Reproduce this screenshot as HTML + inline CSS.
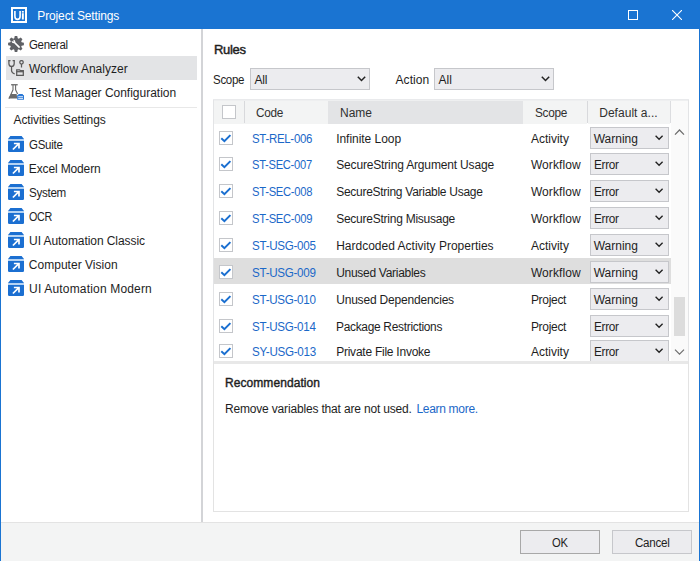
<!DOCTYPE html>
<html><head><meta charset="utf-8">
<style>
*{margin:0;padding:0;box-sizing:border-box}
html,body{width:700px;height:561px;overflow:hidden;background:#fff}
body{position:relative;font-family:"Liberation Sans",sans-serif;font-size:12px;color:#1e1e1e}
.a{position:absolute}
.t{position:absolute;white-space:nowrap}
.link{color:#1b68c8}
.dd{position:absolute;background:#ececef;border:1px solid #c6c7cb;height:22px}
.cb{position:absolute;width:14px;height:14px;border:1px solid #c4c6ca;background:#fff}
.cb svg{position:absolute;left:0;top:0}
.hdr{position:absolute;background:#f3f4f4;height:23px;top:101px}
.btn{position:absolute;background:#ececef;border:1px solid #c6c7cb;height:24px;top:530px}
</style></head><body>
<div class="a" style="left:0;top:0;width:700px;height:29px;background:#1a74d2"></div>
<div class="a" style="left:0;top:29px;width:1px;height:532px;background:#1a74d2"></div>
<div class="a" style="left:699px;top:29px;width:1px;height:532px;background:#1a74d2"></div>

<div class="t" style="left:37.30px;top:9px;line-height:14px;height:14px;color:#fff;letter-spacing:-0.133px">Project Settings</div>
<svg class="a" style="left:11px;top:7px" width="16" height="16"><rect x="1" y="1" width="14" height="14" fill="none" stroke="#fff" stroke-width="2"/><path d="M3.9 4V9.2Q3.9 12.4 6.5 12.4Q9.1 12.4 9.1 9.2V4" fill="none" stroke="#fff" stroke-width="1.6"/><rect x="10.9" y="4" width="1.9" height="1.6" fill="#fff"/><rect x="10.9" y="6.2" width="1.9" height="6.3" fill="#fff"/></svg>
<div class="a" style="left:628px;top:10px;width:10px;height:10px;border:1px solid #fff"></div>
<svg class="a" style="left:672px;top:10px" width="10" height="10"><path d="M0 0L10 10M10 0L0 10" stroke="#fff" stroke-width="1.1"/></svg>
<div class="a" style="left:6px;top:56px;width:191px;height:24px;background:#e3e4e6"></div>
<div class="t" style="left:29.30px;top:38px;line-height:14px;height:14px;letter-spacing:-0.300px;transform:scaleX(0.9539);transform-origin:0 0">General</div>
<div class="t" style="left:29.00px;top:62px;line-height:14px;height:14px;letter-spacing:0.013px">Workflow Analyzer</div>
<div class="t" style="left:29.00px;top:86px;line-height:14px;height:14px;letter-spacing:-0.012px">Test Manager Configuration</div>
<div class="a" style="left:5px;top:107px;width:192px;height:1px;background:#e8e8e8"></div>
<div class="t" style="left:13.50px;top:113px;line-height:14px;height:14px;letter-spacing:-0.100px">Activities Settings</div>
<div class="t" style="left:29.00px;top:138px;line-height:14px;height:14px;letter-spacing:-0.300px;transform:scaleX(0.9606);transform-origin:0 0">GSuite</div>
<div class="t" style="left:28.80px;top:162px;line-height:14px;height:14px;letter-spacing:-0.136px">Excel Modern</div>
<div class="t" style="left:28.80px;top:186px;line-height:14px;height:14px;letter-spacing:-0.300px;transform:scaleX(0.9688);transform-origin:0 0">System</div>
<div class="t" style="left:28.60px;top:210px;line-height:14px;height:14px;letter-spacing:-0.300px;transform:scaleX(0.8977);transform-origin:0 0">OCR</div>
<div class="t" style="left:29.10px;top:234px;line-height:14px;height:14px;letter-spacing:-0.075px">UI Automation Classic</div>
<div class="t" style="left:28.80px;top:258px;line-height:14px;height:14px;letter-spacing:0.021px">Computer Vision</div>
<div class="t" style="left:29.10px;top:282px;line-height:14px;height:14px;letter-spacing:0.174px">UI Automation Modern</div>
<svg class="a" style="left:8px;top:36px" width="16" height="16"><polygon points="6.28,2.36 6.75,0.10 9.25,0.10 9.72,2.36 10.77,2.79 12.70,1.53 14.47,3.30 13.21,5.23 13.64,6.28 15.90,6.75 15.90,9.25 13.64,9.72 13.21,10.77 14.47,12.70 12.70,14.47 10.77,13.21 9.72,13.64 9.25,15.90 6.75,15.90 6.28,13.64 5.23,13.21 3.30,14.47 1.53,12.70 2.79,10.77 2.36,9.72 0.10,9.25 0.10,6.75 2.36,6.28 2.79,5.23 1.53,3.30 3.30,1.53 5.23,2.79" fill="#5f6166"/><path d="M5.5 5.5L11.6 11.6" stroke="#fff" stroke-width="1.7"/><circle cx="5.5" cy="5.4" r="1.75" fill="#fff"/><path d="M4.1 4L5.5 5.4" stroke="#5f6166" stroke-width="1.1"/></svg>
<svg class="a" style="left:8px;top:60px" width="16" height="16" fill="none" stroke="#5a5a5a" stroke-width="1.25"><path d="M0.2 0.7H2.5M4.6 0.7H6.9"/><path d="M0.9 0.7V3.4Q0.9 6.4 3.55 6.4Q6.2 6.4 6.2 3.4V0.7"/><path d="M3.55 6.4V10.8Q3.55 12.7 6.7 14"/><circle cx="13.5" cy="2.3" r="1.75"/><path d="M13.5 4V7.5"/><path d="M8.7 9.9H11.6L12.4 10.7H15.3V15.3H8.7Z"/><path d="M8.7 11.7H15.3"/></svg>
<svg class="a" style="left:8px;top:84px" width="16" height="16"><rect x="3.1" y="0.1" width="6.6" height="1.3" fill="#6a6a6a"/><path d="M5 1V5.8L1.1 14.4M7.6 1V5.8L9.6 10" fill="none" stroke="#6a6a6a" stroke-width="1.1"/><path d="M2.9 10H8.6L9.4 14.6H0.3Z" fill="#6a6a6a"/><path d="M10.6 10H14.6L15.2 11.2H9.9Z" fill="#2a78d6"/><rect x="9.2" y="11" width="6.8" height="4.8" rx="0.5" fill="#2a78d6"/><path d="M10.2 12.7H15M10.2 14.4H15" stroke="#fff" stroke-width="0.85"/></svg>
<svg class="a" style="left:8px;top:136px" width="16" height="16"><path d="M2.4 0H13.6L16 3H0Z" fill="#1b6fd1"/><rect x="0" y="3" width="16" height="2" fill="#b5d3f3"/><path d="M0 5H16V14.8Q16 16 14.8 16H1.2Q0 16 0 14.8Z" fill="#1b6fd1"/><path d="M4.9 13.5L10.8 7.6M5.9 7.5H11V12.6" fill="none" stroke="#fff" stroke-width="1.7"/></svg>
<svg class="a" style="left:8px;top:160px" width="16" height="16"><path d="M2.4 0H13.6L16 3H0Z" fill="#1b6fd1"/><rect x="0" y="3" width="16" height="2" fill="#b5d3f3"/><path d="M0 5H16V14.8Q16 16 14.8 16H1.2Q0 16 0 14.8Z" fill="#1b6fd1"/><path d="M4.9 13.5L10.8 7.6M5.9 7.5H11V12.6" fill="none" stroke="#fff" stroke-width="1.7"/></svg>
<svg class="a" style="left:8px;top:184px" width="16" height="16"><path d="M2.4 0H13.6L16 3H0Z" fill="#1b6fd1"/><rect x="0" y="3" width="16" height="2" fill="#b5d3f3"/><path d="M0 5H16V14.8Q16 16 14.8 16H1.2Q0 16 0 14.8Z" fill="#1b6fd1"/><path d="M4.9 13.5L10.8 7.6M5.9 7.5H11V12.6" fill="none" stroke="#fff" stroke-width="1.7"/></svg>
<svg class="a" style="left:8px;top:208px" width="16" height="16"><path d="M2.4 0H13.6L16 3H0Z" fill="#1b6fd1"/><rect x="0" y="3" width="16" height="2" fill="#b5d3f3"/><path d="M0 5H16V14.8Q16 16 14.8 16H1.2Q0 16 0 14.8Z" fill="#1b6fd1"/><path d="M4.9 13.5L10.8 7.6M5.9 7.5H11V12.6" fill="none" stroke="#fff" stroke-width="1.7"/></svg>
<svg class="a" style="left:8px;top:232px" width="16" height="16"><path d="M2.4 0H13.6L16 3H0Z" fill="#1b6fd1"/><rect x="0" y="3" width="16" height="2" fill="#b5d3f3"/><path d="M0 5H16V14.8Q16 16 14.8 16H1.2Q0 16 0 14.8Z" fill="#1b6fd1"/><path d="M4.9 13.5L10.8 7.6M5.9 7.5H11V12.6" fill="none" stroke="#fff" stroke-width="1.7"/></svg>
<svg class="a" style="left:8px;top:256px" width="16" height="16"><path d="M2.4 0H13.6L16 3H0Z" fill="#1b6fd1"/><rect x="0" y="3" width="16" height="2" fill="#b5d3f3"/><path d="M0 5H16V14.8Q16 16 14.8 16H1.2Q0 16 0 14.8Z" fill="#1b6fd1"/><path d="M4.9 13.5L10.8 7.6M5.9 7.5H11V12.6" fill="none" stroke="#fff" stroke-width="1.7"/></svg>
<svg class="a" style="left:8px;top:280px" width="16" height="16"><path d="M2.4 0H13.6L16 3H0Z" fill="#1b6fd1"/><rect x="0" y="3" width="16" height="2" fill="#b5d3f3"/><path d="M0 5H16V14.8Q16 16 14.8 16H1.2Q0 16 0 14.8Z" fill="#1b6fd1"/><path d="M4.9 13.5L10.8 7.6M5.9 7.5H11V12.6" fill="none" stroke="#fff" stroke-width="1.7"/></svg>
<div class="a" style="left:201px;top:29px;width:2px;height:493px;background:#d3d4d7"></div>
<div class="t" style="left:214.00px;top:42px;line-height:15px;height:15px;font-size:13px;letter-spacing:-0.300px;-webkit-text-stroke:0.45px #1e1e1e">Rules</div>
<div class="t" style="left:213.40px;top:73px;line-height:14px;height:14px;letter-spacing:-0.300px;transform:scaleX(0.9604);transform-origin:0 0">Scope</div>
<div class="dd" style="left:250px;top:68px;width:120px"></div>
<div class="t" style="left:254.60px;top:73px;line-height:14px;height:14px;letter-spacing:-0.250px">All</div>
<svg class="a" style="left:356.6px;top:76px" width="9" height="6"><path d="M0.8 0.8L4.5 4.5L8.2 0.8" fill="none" stroke="#222" stroke-width="1.5"/></svg>
<div class="t" style="left:395.50px;top:73px;line-height:14px;height:14px;letter-spacing:0.080px">Action</div>
<div class="dd" style="left:434px;top:68px;width:120px"></div>
<div class="t" style="left:438.60px;top:73px;line-height:14px;height:14px;letter-spacing:-0.050px">All</div>
<svg class="a" style="left:540.6px;top:76px" width="9" height="6"><path d="M0.8 0.8L4.5 4.5L8.2 0.8" fill="none" stroke="#222" stroke-width="1.5"/></svg>
<div class="a" style="left:213px;top:99px;width:476px;height:263px;border:1px solid #e3e4e6;border-bottom:none;background:#fff"></div>
<div class="a" style="left:213px;top:99px;width:476px;height:1px;background:#e9eaec"></div>
<div class="a" style="left:214px;top:100px;width:474px;height:1px;background:#eeeff0"></div>
<div class="a" style="left:671px;top:101px;width:17px;height:260px;background:#fafafa"></div>
<div class="a" style="left:670px;top:101px;width:1px;height:22px;background:#dcdde0"></div>
<div class="hdr" style="left:214px;width:114px"></div>
<div class="hdr" style="left:328px;width:195px;background:#e3e4e6"></div>
<div class="hdr" style="left:523px;width:64px"></div>
<div class="hdr" style="left:588px;width:82px"></div>
<div class="a" style="left:244px;top:101px;width:1px;height:22px;background:#d8d9dc"></div>
<div class="a" style="left:587px;top:101px;width:1px;height:22px;background:#d8d9dc"></div>
<div class="cb" style="left:222px;top:105px"></div>
<div class="t" style="left:256.40px;top:106px;line-height:14px;height:14px;color:#303030;letter-spacing:-0.300px;transform:scaleX(0.9822);transform-origin:0 0">Code</div>
<div class="t" style="left:340.00px;top:106px;line-height:14px;height:14px;color:#303030">Name</div>
<div class="t" style="left:534.60px;top:106px;line-height:14px;height:14px;color:#303030;letter-spacing:-0.300px;transform:scaleX(0.9848);transform-origin:0 0">Scope</div>
<div class="t" style="left:599.20px;top:106px;line-height:14px;height:14px;color:#303030;letter-spacing:0.036px">Default a...</div>
<div class="a" style="left:214px;top:258px;width:457px;height:26px;background:#dedede"></div>
<div class="cb" style="left:219px;top:131px"><svg width="12" height="12"><path d="M1.3 6.3L4.4 9.2L10.4 3.1" fill="none" stroke="#1a6fd0" stroke-width="2"/></svg></div>
<div class="t" style="left:252.10px;top:132px;line-height:14px;height:14px;color:#1b68c8;letter-spacing:-0.300px;transform:scaleX(0.9542);transform-origin:0 0">ST-REL-006</div>
<div class="t" style="left:336.20px;top:132px;line-height:14px;height:14px;letter-spacing:-0.042px">Infinite Loop</div>
<div class="t" style="left:530.90px;top:132px;line-height:14px;height:14px">Activity</div>
<div class="dd" style="left:590px;top:127px;width:79px"></div>
<div class="t" style="left:593.70px;top:132px;line-height:14px;height:14px">Warning</div>
<svg class="a" style="left:655.2px;top:135.1px" width="9" height="6"><path d="M0.6 0.7L4.1 4.2L7.6 0.7" fill="none" stroke="#222" stroke-width="1.35"/></svg>
<div class="cb" style="left:219px;top:157px"><svg width="12" height="12"><path d="M1.3 6.3L4.4 9.2L10.4 3.1" fill="none" stroke="#1a6fd0" stroke-width="2"/></svg></div>
<div class="t" style="left:252.10px;top:158px;line-height:14px;height:14px;color:#1b68c8;letter-spacing:-0.300px;transform:scaleX(0.9296);transform-origin:0 0">ST-SEC-007</div>
<div class="t" style="left:336.20px;top:158px;line-height:14px;height:14px;letter-spacing:-0.158px">SecureString Argument Usage</div>
<div class="t" style="left:530.90px;top:158px;line-height:14px;height:14px;letter-spacing:0.100px">Workflow</div>
<div class="dd" style="left:590px;top:153px;width:79px"></div>
<div class="t" style="left:593.70px;top:158px;line-height:14px;height:14px;letter-spacing:-0.300px;transform:scaleX(0.9806);transform-origin:0 0">Error</div>
<svg class="a" style="left:655.2px;top:161.1px" width="9" height="6"><path d="M0.6 0.7L4.1 4.2L7.6 0.7" fill="none" stroke="#222" stroke-width="1.35"/></svg>
<div class="cb" style="left:219px;top:184px"><svg width="12" height="12"><path d="M1.3 6.3L4.4 9.2L10.4 3.1" fill="none" stroke="#1a6fd0" stroke-width="2"/></svg></div>
<div class="t" style="left:252.10px;top:185px;line-height:14px;height:14px;color:#1b68c8;letter-spacing:-0.300px;transform:scaleX(0.9357);transform-origin:0 0">ST-SEC-008</div>
<div class="t" style="left:336.20px;top:185px;line-height:14px;height:14px;letter-spacing:-0.277px">SecureString Variable Usage</div>
<div class="t" style="left:530.90px;top:185px;line-height:14px;height:14px;letter-spacing:0.100px">Workflow</div>
<div class="dd" style="left:590px;top:180px;width:79px"></div>
<div class="t" style="left:593.70px;top:185px;line-height:14px;height:14px;letter-spacing:-0.300px;transform:scaleX(0.9806);transform-origin:0 0">Error</div>
<svg class="a" style="left:655.2px;top:188.1px" width="9" height="6"><path d="M0.6 0.7L4.1 4.2L7.6 0.7" fill="none" stroke="#222" stroke-width="1.35"/></svg>
<div class="cb" style="left:219px;top:211px"><svg width="12" height="12"><path d="M1.3 6.3L4.4 9.2L10.4 3.1" fill="none" stroke="#1a6fd0" stroke-width="2"/></svg></div>
<div class="t" style="left:252.10px;top:212px;line-height:14px;height:14px;color:#1b68c8;letter-spacing:-0.300px;transform:scaleX(0.9357);transform-origin:0 0">ST-SEC-009</div>
<div class="t" style="left:336.20px;top:212px;line-height:14px;height:14px;letter-spacing:-0.250px">SecureString Misusage</div>
<div class="t" style="left:530.90px;top:212px;line-height:14px;height:14px;letter-spacing:0.100px">Workflow</div>
<div class="dd" style="left:590px;top:207px;width:79px"></div>
<div class="t" style="left:593.70px;top:212px;line-height:14px;height:14px;letter-spacing:-0.300px;transform:scaleX(0.9806);transform-origin:0 0">Error</div>
<svg class="a" style="left:655.2px;top:215.1px" width="9" height="6"><path d="M0.6 0.7L4.1 4.2L7.6 0.7" fill="none" stroke="#222" stroke-width="1.35"/></svg>
<div class="cb" style="left:219px;top:238px"><svg width="12" height="12"><path d="M1.3 6.3L4.4 9.2L10.4 3.1" fill="none" stroke="#1a6fd0" stroke-width="2"/></svg></div>
<div class="t" style="left:252.10px;top:239px;line-height:14px;height:14px;color:#1b68c8;letter-spacing:-0.300px;transform:scaleX(0.9683);transform-origin:0 0">ST-USG-005</div>
<div class="t" style="left:336.20px;top:239px;line-height:14px;height:14px">Hardcoded Activity Properties</div>
<div class="t" style="left:530.90px;top:239px;line-height:14px;height:14px">Activity</div>
<div class="dd" style="left:590px;top:234px;width:79px"></div>
<div class="t" style="left:593.70px;top:239px;line-height:14px;height:14px">Warning</div>
<svg class="a" style="left:655.2px;top:242.1px" width="9" height="6"><path d="M0.6 0.7L4.1 4.2L7.6 0.7" fill="none" stroke="#222" stroke-width="1.35"/></svg>
<div class="cb" style="left:219px;top:265px"><svg width="12" height="12"><path d="M1.3 6.3L4.4 9.2L10.4 3.1" fill="none" stroke="#1a6fd0" stroke-width="2"/></svg></div>
<div class="t" style="left:252.10px;top:266px;line-height:14px;height:14px;color:#1b68c8;letter-spacing:-0.300px;transform:scaleX(0.9683);transform-origin:0 0">ST-USG-009</div>
<div class="t" style="left:336.20px;top:266px;line-height:14px;height:14px;letter-spacing:-0.287px">Unused Variables</div>
<div class="t" style="left:530.90px;top:266px;line-height:14px;height:14px;letter-spacing:0.100px">Workflow</div>
<div class="dd" style="left:590px;top:261px;width:79px"></div>
<div class="t" style="left:593.70px;top:266px;line-height:14px;height:14px">Warning</div>
<svg class="a" style="left:655.2px;top:269.1px" width="9" height="6"><path d="M0.6 0.7L4.1 4.2L7.6 0.7" fill="none" stroke="#222" stroke-width="1.35"/></svg>
<div class="cb" style="left:219px;top:292px"><svg width="12" height="12"><path d="M1.3 6.3L4.4 9.2L10.4 3.1" fill="none" stroke="#1a6fd0" stroke-width="2"/></svg></div>
<div class="t" style="left:252.10px;top:293px;line-height:14px;height:14px;color:#1b68c8;letter-spacing:-0.300px;transform:scaleX(0.9683);transform-origin:0 0">ST-USG-010</div>
<div class="t" style="left:336.20px;top:293px;line-height:14px;height:14px;letter-spacing:-0.194px">Unused Dependencies</div>
<div class="t" style="left:530.90px;top:293px;line-height:14px;height:14px;letter-spacing:-0.300px">Project</div>
<div class="dd" style="left:590px;top:288px;width:79px"></div>
<div class="t" style="left:593.70px;top:293px;line-height:14px;height:14px">Warning</div>
<svg class="a" style="left:655.2px;top:296.1px" width="9" height="6"><path d="M0.6 0.7L4.1 4.2L7.6 0.7" fill="none" stroke="#222" stroke-width="1.35"/></svg>
<div class="cb" style="left:219px;top:319px"><svg width="12" height="12"><path d="M1.3 6.3L4.4 9.2L10.4 3.1" fill="none" stroke="#1a6fd0" stroke-width="2"/></svg></div>
<div class="t" style="left:252.10px;top:320px;line-height:14px;height:14px;color:#1b68c8;letter-spacing:-0.300px;transform:scaleX(0.9683);transform-origin:0 0">ST-USG-014</div>
<div class="t" style="left:336.20px;top:320px;line-height:14px;height:14px;letter-spacing:-0.300px;transform:scaleX(0.9944);transform-origin:0 0">Package Restrictions</div>
<div class="t" style="left:530.90px;top:320px;line-height:14px;height:14px;letter-spacing:-0.300px">Project</div>
<div class="dd" style="left:590px;top:315px;width:79px"></div>
<div class="t" style="left:593.70px;top:320px;line-height:14px;height:14px;letter-spacing:-0.300px;transform:scaleX(0.9806);transform-origin:0 0">Error</div>
<svg class="a" style="left:655.2px;top:323.1px" width="9" height="6"><path d="M0.6 0.7L4.1 4.2L7.6 0.7" fill="none" stroke="#222" stroke-width="1.35"/></svg>
<div class="cb" style="left:219px;top:344px"><svg width="12" height="12"><path d="M1.3 6.3L4.4 9.2L10.4 3.1" fill="none" stroke="#1a6fd0" stroke-width="2"/></svg></div>
<div class="t" style="left:252.10px;top:345px;line-height:14px;height:14px;color:#1b68c8;letter-spacing:-0.300px;transform:scaleX(0.9683);transform-origin:0 0">SY-USG-013</div>
<div class="t" style="left:336.20px;top:345px;line-height:14px;height:14px;letter-spacing:-0.244px">Private File Invoke</div>
<div class="t" style="left:530.90px;top:345px;line-height:14px;height:14px">Activity</div>
<div class="dd" style="left:590px;top:340px;width:79px"></div>
<div class="t" style="left:593.70px;top:345px;line-height:14px;height:14px;letter-spacing:-0.300px;transform:scaleX(0.9806);transform-origin:0 0">Error</div>
<svg class="a" style="left:655.2px;top:348.1px" width="9" height="6"><path d="M0.6 0.7L4.1 4.2L7.6 0.7" fill="none" stroke="#222" stroke-width="1.35"/></svg>
<svg class="a" style="left:674px;top:128px" width="11" height="9"><path d="M1 6.6L5.5 2L10 6.6" fill="none" stroke="#6e6e6e" stroke-width="1.3"/></svg>
<div class="a" style="left:674px;top:297px;width:11px;height:39px;background:#dcdcdc"></div>
<svg class="a" style="left:674px;top:348px" width="11" height="9"><path d="M1 1.6L5.5 6.2L10 1.6" fill="none" stroke="#6e6e6e" stroke-width="1.2"/></svg>
<div class="a" style="left:214px;top:361px;width:474px;height:3px;background:#e8e8e8"></div>
<div class="a" style="left:213px;top:362px;width:476px;height:150px;border:1px solid #e3e3e3;border-top:none"></div>
<div class="t" style="left:224.90px;top:376px;line-height:14px;height:14px;letter-spacing:0.085px;-webkit-text-stroke:0.4px #1e1e1e">Recommendation</div>
<div class="t" style="left:224.90px;top:402px;line-height:14px;height:14px;letter-spacing:-0.168px">Remove variables that are not used.</div>
<div class="t" style="left:416.40px;top:402px;line-height:14px;height:14px;color:#1b68c8;letter-spacing:-0.300px">Learn more.</div>
<div class="a" style="left:1px;top:522px;width:698px;height:39px;background:#f3f4f4;border-top:1px solid #e3e3e3"></div>
<div class="btn" style="left:520px;width:80px;border-color:#a8a8a8"></div>
<div class="btn" style="left:612px;width:80px"></div>
<div class="t" style="left:552.40px;top:536px;line-height:14px;height:14px;letter-spacing:-0.300px;transform:scaleX(0.9341);transform-origin:0 0">OK</div>
<div class="t" style="left:634.60px;top:536px;line-height:14px;height:14px;letter-spacing:-0.300px;transform:scaleX(0.9690);transform-origin:0 0">Cancel</div>
</body></html>
